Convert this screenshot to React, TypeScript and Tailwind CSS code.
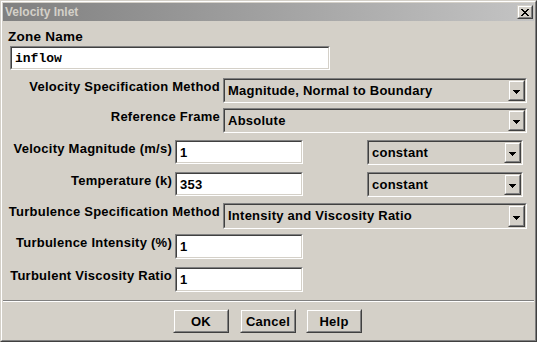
import React from "react";

const Sunken: React.FC<{ className?: string; inner?: string; children?: React.ReactNode }> = ({ className = "", inner = "", children }) => (
  <div className={`border border-t-[#808080] border-l-[#808080] border-r-white border-b-white ${className}`}>
    <div className={`h-full w-full border border-t-[#404040] border-l-[#404040] border-r-[#d4d0c8] border-b-[#d4d0c8] ${inner}`}>
      {children}
    </div>
  </div>
);

const Raised: React.FC<{ className?: string; inner?: string; children?: React.ReactNode }> = ({ className = "", inner = "", children }) => (
  <div className={`border border-t-[#d4d0c8] border-l-[#d4d0c8] border-r-[#404040] border-b-[#404040] ${className}`}>
    <div className={`h-full w-full border border-t-white border-l-white border-r-[#808080] border-b-[#808080] bg-[#d4d0c8] ${inner}`}>
      {children}
    </div>
  </div>
);

const Arrow = () => (
  <svg width="7" height="4" viewBox="0 0 7 4" shapeRendering="crispEdges">
    <rect x="0" y="0" width="7" height="1" fill="#000" />
    <rect x="1" y="1" width="5" height="1" fill="#000" />
    <rect x="2" y="2" width="3" height="1" fill="#000" />
    <rect x="3" y="3" width="1" height="1" fill="#000" />
  </svg>
);

const Dropdown: React.FC<{ text: string; className?: string }> = ({ text, className = "" }) => (
  <Sunken className={className} inner="bg-[#d4d0c8] flex items-stretch">
    <div className="flex-1 pl-[3px] pt-[3px] leading-[15px] whitespace-nowrap overflow-hidden">{text}</div>
    <Raised className="w-[17px] h-full" inner="flex items-center justify-center pt-[3px]">
      <Arrow />
    </Raised>
  </Sunken>
);

const TextField: React.FC<{ value: string; className?: string; mono?: boolean }> = ({ value, className = "", mono }) => (
  <Sunken className={className} inner="bg-white">
    <div
      className={`pl-[3px] pt-[3px] leading-[15px] whitespace-nowrap ${mono ? "font-['Liberation_Mono'] tracking-normal" : ""}`}
    >
      {value}
    </div>
  </Sunken>
);

const Btn: React.FC<{ label: string }> = ({ label }) => (
  <Raised className="w-[56px] h-[24px]" inner="flex items-center justify-center leading-[15px]">
    {label}
  </Raised>
);

export default function App() {
  return (
    <div className="w-[537px] h-[342px] font-['Liberation_Sans',Arial,sans-serif] font-bold text-[13px] tracking-[0.25px] text-black bg-[#d4d0c8]">
      <div className="h-full w-full border border-t-[#d4d0c8] border-l-[#d4d0c8] border-r-[#404040] border-b-[#404040]">
        <div className="h-full w-full border border-t-white border-l-white border-r-[#808080] border-b-[#808080] p-[1px] flex flex-col">
          {/* Title bar */}
          <div className="h-[18px] shrink-0 bg-linear-to-r from-[#808080] to-[#c4c4c4] flex items-start">
            <div className="flex-1 pl-[2px] pt-[2px] text-[12px] leading-[14px] tracking-normal text-[#d4d0c8]">Velocity Inlet</div>
            <Raised className="w-[16px] h-[14px] mt-[2px] mr-[1px]" inner="flex items-center justify-center">
              <svg width="8" height="7" viewBox="0 0 8 7" shapeRendering="crispEdges">
                <path d="M0 0h2v1H0zM6 0h2v1H6zM1 1h2v1H1zM5 1h2v1H5zM2 2h4v1H2zM3 3h2v1H3zM2 4h4v1H2zM1 5h2v1H1zM5 5h2v1H5zM0 6h2v1H0zM6 6h2v1H6z" fill="#000" />
              </svg>
            </Raised>
          </div>

          {/* Content */}
          <div className="flex flex-col flex-1">
            <div className="ml-[5px] mt-[8px] leading-[15px] text-[13.5px]">Zone Name</div>
            <TextField value="inflow" mono className="ml-[7px] mt-[2px] w-[320px] h-[24px]" />

            <div className="flex items-start mt-[8px]">
              <div className="w-[217px] text-right pt-[1px] leading-[15px]">Velocity Specification Method</div>
              <Dropdown text="Magnitude, Normal to Boundary" className="ml-[3px] w-[304px] h-[25px]" />
            </div>
            <div className="flex items-start mt-[5px]">
              <div className="w-[217px] text-right pt-[1px] leading-[15px]">Reference Frame</div>
              <Dropdown text="Absolute" className="ml-[3px] w-[304px] h-[25px]" />
            </div>

            <div className="flex items-start mt-[7px]">
              <div className="w-[169px] text-right pt-[1px] leading-[15px]">Velocity Magnitude (m/s)</div>
              <TextField value="1" className="ml-[3px] w-[128px] h-[24px]" />
              <Dropdown text="constant" className="ml-[64px] w-[156px] h-[25px]" />
            </div>
            <div className="flex items-start mt-[7px]">
              <div className="w-[169px] text-right pt-[1px] leading-[15px]">Temperature (k)</div>
              <TextField value="353" className="ml-[3px] w-[128px] h-[24px]" />
              <Dropdown text="constant" className="ml-[64px] w-[156px] h-[25px]" />
            </div>

            <div className="flex items-start mt-[6px]">
              <div className="w-[217px] text-right pt-[1px] leading-[15px]">Turbulence Specification Method</div>
              <Dropdown text="Intensity and Viscosity Ratio" className="ml-[3px] w-[304px] h-[26px]" />
            </div>
            <div className="flex items-start mt-[5px]">
              <div className="w-[169px] text-right pt-[1px] leading-[15px]">Turbulence Intensity (%)</div>
              <TextField value="1" className="ml-[3px] w-[128px] h-[25px]" />
            </div>
            <div className="flex items-start mt-[8px]">
              <div className="w-[169px] text-right pt-[1px] leading-[15px]">Turbulent Viscosity Ratio</div>
              <TextField value="1" className="ml-[3px] w-[128px] h-[25px]" />
            </div>

            <div className="mt-[8px] h-[2px] border-t border-t-[#808080] border-b border-b-white" />

            <div className="flex justify-center mt-[7px] pr-[2px]">
              <Btn label="OK" />
              <div className="w-[11px]" />
              <Btn label="Cancel" />
              <div className="w-[10px]" />
              <Btn label="Help" />
            </div>
          </div>
        </div>
      </div>
    </div>
  );
}
